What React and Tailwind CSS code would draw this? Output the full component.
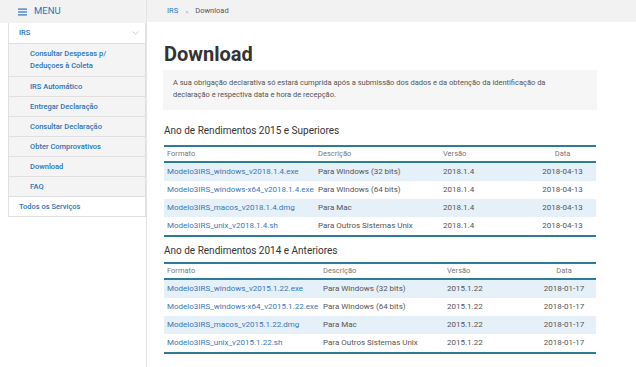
import React from "react";

const submenu = [
  ["Consultar Despesas p/", "Deduçoes à Coleta"],
  ["IRS Automático"],
  ["Entregar Declaração"],
  ["Consultar Declaração"],
  ["Obter Comprovativos"],
  ["Download"],
  ["FAQ"],
];

const tables = [
  {
    title: "Ano de Rendimentos 2015 e Superiores",
    cols: "grid-cols-[150px_125px_90px_67px]",
    rows: [
      ["Modelo3IRS_windows_v2018.1.4.exe", "Para Windows (32 bits)", "2018.1.4", "2018-04-13"],
      ["Modelo3IRS_windows-x64_v2018.1.4.exe", "Para Windows (64 bits)", "2018.1.4", "2018-04-13"],
      ["Modelo3IRS_macos_v2018.1.4.dmg", "Para Mac", "2018.1.4", "2018-04-13"],
      ["Modelo3IRS_unix_v2018.1.4.sh", "Para Outros Sistemas Unix", "2018.1.4", "2018-04-13"],
    ],
  },
  {
    title: "Ano de Rendimentos 2014 e Anteriores",
    cols: "grid-cols-[155px_124px_89px_64px]",
    rows: [
      ["Modelo3IRS_windows_v2015.1.22.exe", "Para Windows (32 bits)", "2015.1.22", "2018-01-17"],
      ["Modelo3IRS_windows-x64_v2015.1.22.exe", "Para Windows (64 bits)", "2015.1.22", "2018-01-17"],
      ["Modelo3IRS_macos_v2015.1.22.dmg", "Para Mac", "2015.1.22", "2018-01-17"],
      ["Modelo3IRS_unix_v2015.1.22.sh", "Para Outros Sistemas Unix", "2015.1.22", "2018-01-17"],
    ],
  },
];

function DownloadTable({ title, cols, rows, first }) {
  return (
    <div>
      <h2 className={`${first ? "mt-[14px]" : "mt-[7px]"} text-[10px] leading-[14px] text-[#333]`}>{title}</h2>
      <div className={`${first ? "mt-[7px]" : "mt-[4px]"} w-[432px] border-t-2 border-b-2 border-[#2d7c96]`}>
        <div className={`grid ${cols} h-[16px] items-center border-b-2 border-[#2d7c96] text-[7.5px] text-[#777]`}>
          <span className="pl-[3px]">Formato</span>
          <span className="pl-[4px]">Descrição</span>
          <span className="pl-[4px]">Versão</span>
          <span className="text-center">Data</span>
        </div>
        {rows.map((r, i) => (
          <div
            key={r[0]}
            className={`grid ${cols} h-[18px] items-center text-[8px] ${i % 2 === 0 ? "bg-[#e6f0f8]" : "bg-white"}`}
          >
            <span className="pl-[3px] text-[#3a78b4] whitespace-nowrap">{r[0]}</span>
            <span className="pl-[4px] text-[#555] whitespace-nowrap">{r[1]}</span>
            <span className="pl-[4px] text-[#555]">{r[2]}</span>
            <span className="text-center text-[#555]">{r[3]}</span>
          </div>
        ))}
      </div>
    </div>
  );
}

export default function App() {
  return (
    <div className="flex w-[636px] h-[367px] bg-white font-['Roboto',sans-serif] overflow-hidden">
      {/* Sidebar */}
      <aside className="w-[147px] shrink-0 border-r border-[#e4e4e4]">
        <div className="h-[23px] bg-[#f2f2f2] flex items-center pl-[18px] gap-[7px] text-[#2a74b8]">
          <svg width="9" height="8" viewBox="0 0 9 8" className="shrink-0">
            <rect x="0" y="0.5" width="9" height="1.2" fill="currentColor" />
            <rect x="0" y="3.4" width="9" height="1.2" fill="currentColor" />
            <rect x="0" y="6.3" width="9" height="1.2" fill="currentColor" />
          </svg>
          <span className="text-[9.5px]">MENU</span>
        </div>
        <div className="ml-2 border-x border-b border-[#e0e0e0]">
          <div className="h-[20px] flex items-center justify-between pl-[10px] pr-[6px] bg-white text-[7.5px] font-medium text-[#2a74b8]">
            <span>IRS</span>
            <svg width="7" height="4" viewBox="0 0 7 4">
              <path d="M0.5 0.5 L3.5 3.2 L6.5 0.5" fill="none" stroke="#c4c4c4" strokeWidth="0.8" />
            </svg>
          </div>
          {submenu.map((lines) => (
            <div
              key={lines[0]}
              className={`${lines.length > 1 ? "py-[4px]" : "h-[20px] flex flex-col justify-center"} border-t border-[#e0e0e0] bg-[#f4f4f4] pl-[21px] text-[7.5px] leading-[12px] font-medium text-[#2a74b8]`}
            >
              {lines.map((l) => (
                <div key={l}>{l}</div>
              ))}
            </div>
          ))}
          <div className="h-[20px] flex items-center border-t border-[#e0e0e0] bg-white pl-[10px] text-[7.5px] font-medium text-[#2a74b8]">
            Todos os Serviços
          </div>
        </div>
      </aside>

      {/* Main */}
      <main className="flex-1">
        <div className="h-[22px] bg-[#f2f2f2] flex items-center pl-[20px] gap-[7px] text-[7.5px]">
          <span className="text-[#2a74b8]">IRS</span>
          <span className="text-[#999] text-[6px]">&gt;</span>
          <span className="text-[#555]">Download</span>
        </div>
        <div className="pl-[17px]">
          <h1 className="mt-[20px] text-[20px] leading-[24px] font-bold text-[#333]">Download</h1>
          <div className="mt-[4px] w-[434px] -ml-px h-[40px] bg-[#f6f6f6] pl-[10px] pt-[7px] text-[7.5px] leading-[12px] text-[#555]">
            A sua obrigação declarativa só estará cumprida após a submissão dos dados e da obtenção da identificação da
            <br />
            declaração e respectiva data e hora de recepção.
          </div>
          {tables.map((t, i) => (
            <DownloadTable key={t.title} {...t} first={i === 0} />
          ))}
        </div>
      </main>
    </div>
  );
}
